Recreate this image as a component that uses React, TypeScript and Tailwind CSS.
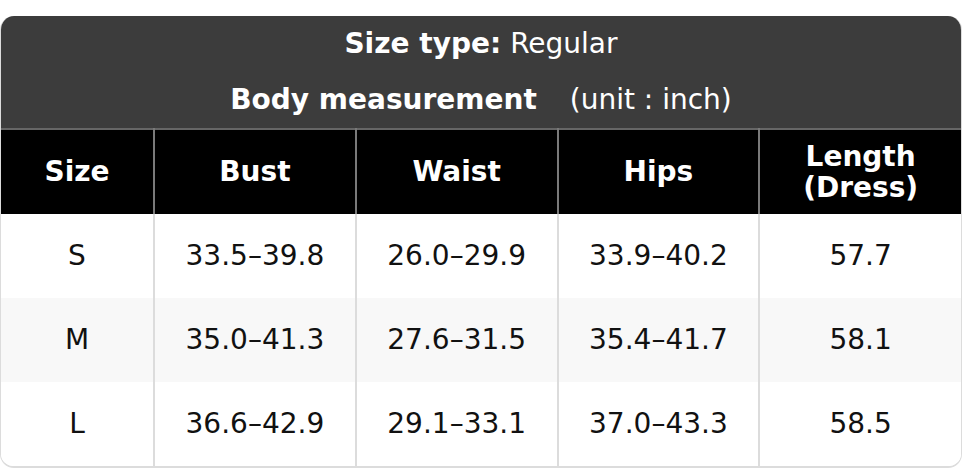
import React from 'react';

const rows = [
  { size: 'S', bust: '33.5–39.8', waist: '26.0–29.9', hips: '33.9–40.2', length: '57.7' },
  { size: 'M', bust: '35.0–41.3', waist: '27.6–31.5', hips: '35.4–41.7', length: '58.1' },
  { size: 'L', bust: '36.6–42.9', waist: '29.1–33.1', hips: '37.0–43.3', length: '58.5' },
];

const App = () => {
  return (
    <div className="w-[962px] bg-white pt-4 font-['DejaVu_Sans',sans-serif]">
      <div className="overflow-hidden rounded-[14px] border-x border-b-2 border-[#dcdcdc]">
        <div className="bg-[#3c3c3c] text-white text-[28px]">
          <div className="flex h-[56px] items-center justify-center">
            <span className="font-bold">Size type:</span>
            <span className="ml-[9px]">Regular</span>
          </div>
          <div className="flex h-[56px] items-center justify-center">
            <span className="font-bold">Body measurement</span>
            <span className="ml-[33px]">(unit : inch)</span>
          </div>
        </div>
        <table className="w-full table-fixed border-collapse text-center text-[28px]">
          <colgroup>
            <col className="w-[153px]" />
            <col />
            <col />
            <col />
            <col />
          </colgroup>
          <thead>
            <tr className="h-[85px] bg-black text-white border-t-2 border-[#666]">
              <th className="border-r-2 border-[#7a7a7a] font-bold">Size</th>
              <th className="border-r-2 border-[#7a7a7a] font-bold">Bust</th>
              <th className="border-r-2 border-[#7a7a7a] font-bold">Waist</th>
              <th className="border-r-2 border-[#7a7a7a] font-bold">Hips</th>
              <th className="font-bold leading-[31px]">
                Length
                <br />
                (Dress)
              </th>
            </tr>
          </thead>
          <tbody>
            {rows.map((r, i) => (
              <tr key={r.size} className={`h-[84px] text-[#111] ${i % 2 === 1 ? 'bg-[#f8f8f8]' : 'bg-white'}`}>
                <td className="border-r-2 border-[#dcdcdc]">{r.size}</td>
                <td className="border-r-2 border-[#dcdcdc]">{r.bust}</td>
                <td className="border-r-2 border-[#dcdcdc]">{r.waist}</td>
                <td className="border-r-2 border-[#dcdcdc]">{r.hips}</td>
                <td>{r.length}</td>
              </tr>
            ))}
          </tbody>
        </table>
      </div>
    </div>
  );
};

export default App;
